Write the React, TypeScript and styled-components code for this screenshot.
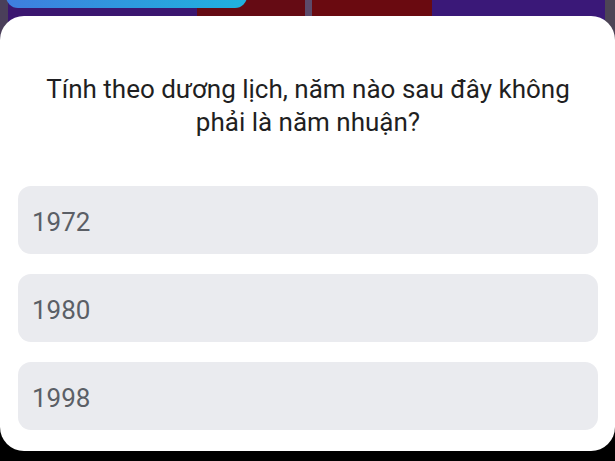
import styled, { createGlobalStyle } from "styled-components";

const GlobalStyle = createGlobalStyle`
  html, body {
    margin: 0;
    padding: 0;
    background: #000;
  }
  body {
    font-family: Roboto, "Noto Sans", "Liberation Sans", sans-serif;
  }
`;

const options = ["1972", "1980", "1998"];

const Screen = styled.div`
  width: 615px;
  height: 461px;
  display: flex;
  flex-direction: column;
  background: #000;
  overflow: hidden;
`;

const Backdrop = styled.div`
  position: relative;
  height: 40px;
  margin-bottom: -24px;
  display: flex;
  flex-shrink: 0;
`;

type segment = {
  w: number,
  color: string,
}

const Segment = styled.div<segment>`
  width: ${p => p.w}px;
  height: 100%;
  background: ${p => p.color};
`;

const TopButton = styled.div`
  position: absolute;
  left: 6px;
  top: -14px;
  width: 241px;
  height: 22px;
  border-radius: 0 0 12px 12px;
  background: linear-gradient(90deg, #3f7ddf 0%, #2e9ade 50%, #1fb2df 100%);
`;

const Card = styled.div`
  position: relative;
  height: 435px;
  background: #fff;
  border-radius: 24px;
  box-sizing: border-box;
  padding: 57px 17px 0 18px;
  display: flex;
  flex-direction: column;
`;

const Question = styled.div`
  font-size: 26px;
  line-height: 33px;
  color: #1f1f22;
  text-align: center;
  padding: 0 8px;
  margin-bottom: 47px;
`;

const OptionList = styled.div`
  display: flex;
  flex-direction: column;
  gap: 20px;
`;

const Option = styled.div`
  height: 68px;
  border-radius: 13px;
  background: #eaebef;
  display: flex;
  align-items: center;
  padding: 3px 0 0 14px;
  box-sizing: border-box;
  font-size: 26px;
  color: #5b5f66;
`;

export default function App() {
  return (
    <>
      <GlobalStyle />
      <Screen>
        <Backdrop>
          <Segment w={8} color="#4a3f5a" />
          <Segment w={189} color="#3b1670" />
          <Segment w={108} color="#650b14" />
          <Segment w={7} color="#5c4a6a" />
          <Segment w={120} color="#6a0a10" />
          <Segment w={173} color="#3a1878" />
          <Segment w={10} color="#4d4456" />
          <TopButton />
        </Backdrop>
        <Card>
          <Question>Tính theo dương lịch, năm nào sau đây không phải là năm nhuận?</Question>
          <OptionList>
            {options.map(o => (
              <Option key={o}>{o}</Option>
            ))}
          </OptionList>
        </Card>
      </Screen>
    </>
  );
}
